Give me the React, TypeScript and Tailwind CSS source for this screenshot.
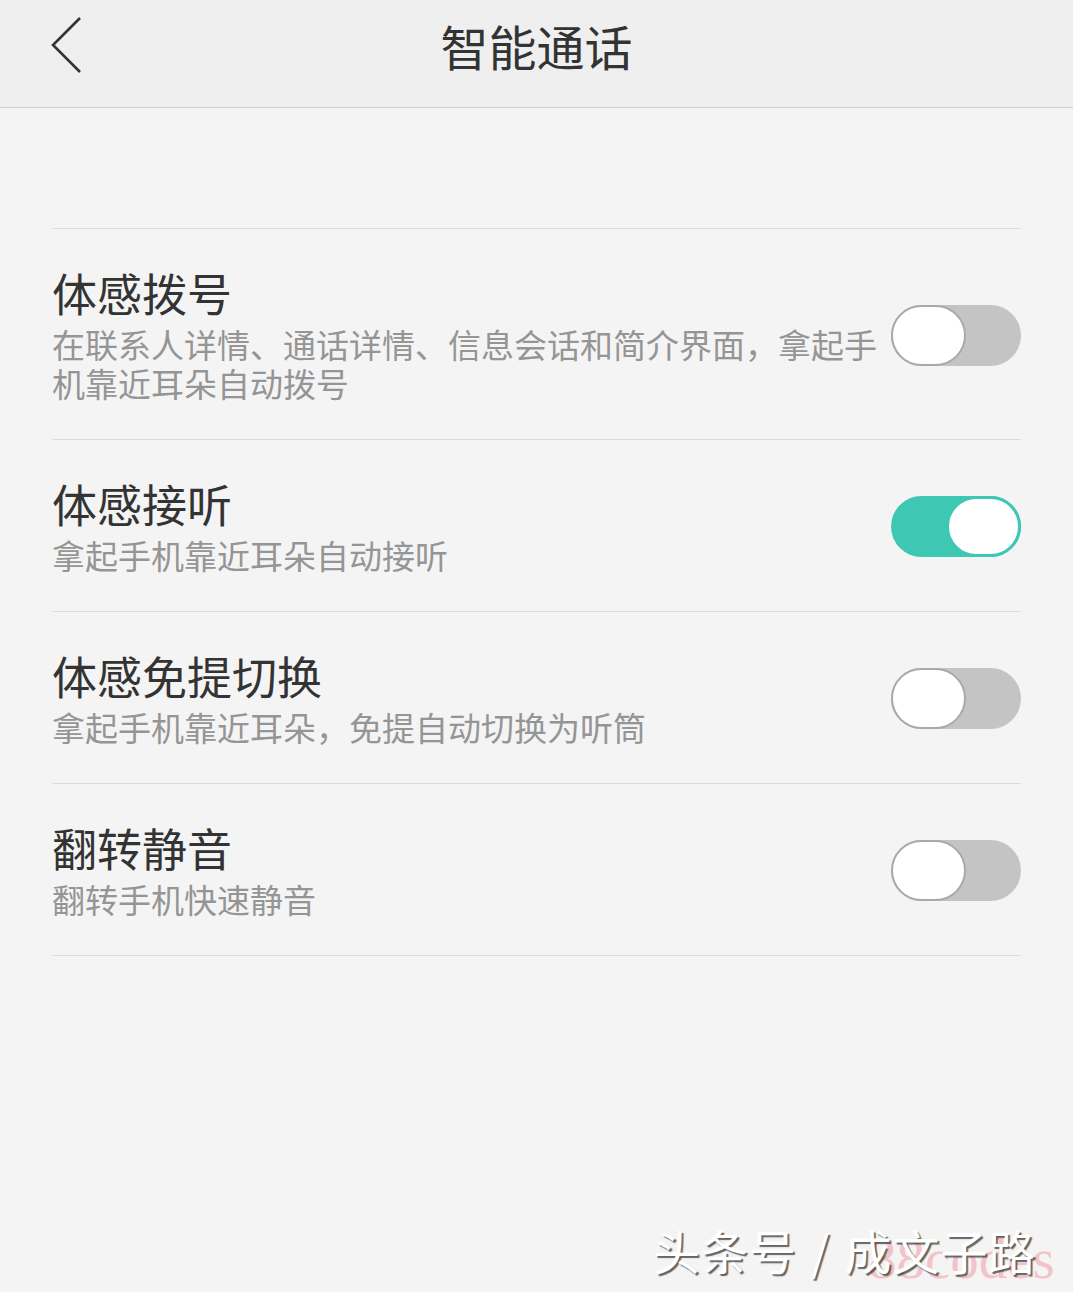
import React from "react";

type Setting = {
  title: string;
  desc: string;
  on: boolean;
};

const settings: Setting[] = [
  {
    title: "体感拨号",
    desc: "在联系人详情、通话详情、信息会话和简介界面，拿起手机靠近耳朵自动拨号",
    on: false,
  },
  { title: "体感接听", desc: "拿起手机靠近耳朵自动接听", on: true },
  { title: "体感免提切换", desc: "拿起手机靠近耳朵，免提自动切换为听筒", on: false },
  { title: "翻转静音", desc: "翻转手机快速静音", on: false },
];

function Toggle({ on }: { on: boolean }) {
  if (on) {
    return (
      <div className="flex h-[61px] w-[130px] shrink-0 justify-end rounded-full bg-[#3ec8b4]">
        <div className="h-[61px] w-[75px] rounded-full border-[3px] border-[#3ec8b4] bg-white" />
      </div>
    );
  }
  return (
    <div className="flex h-[61px] w-[130px] shrink-0 justify-start rounded-full bg-[#c4c4c4]">
      <div className="h-[61px] w-[75px] rounded-full border-[2.5px] border-[#a9a9a9] bg-white" />
    </div>
  );
}

function SettingRow({ item }: { item: Setting }) {
  return (
    <div className="flex items-center gap-[12px] border-t border-[#dcdcdc] pt-[38px] pb-[36px]">
      <div className="flex-1">
        <div className="text-[45px] leading-[52px] text-[#333333]">{item.title}</div>
        <div className="mt-[6px] text-[33px] leading-[39px] text-[#959595]">{item.desc}</div>
      </div>
      <Toggle on={item.on} />
    </div>
  );
}

export default function App() {
  return (
    <div className="relative h-[1292px] w-[1073px] overflow-hidden bg-[#f4f4f4] font-['Noto_Sans_CJK_SC','Noto_Sans',sans-serif]">
      <div className="grid h-[108px] grid-cols-[1fr_auto_1fr] items-center border-b border-[#d0d0d0] bg-[#efefef] pb-[18px]">
        <div className="pl-[50px]">
          <svg width="34" height="58" viewBox="0 0 34 58" fill="none">
            <path d="M30 2 L3 29 L30 56" stroke="#333333" strokeWidth="2.6" />
          </svg>
        </div>
        <div className="text-[48px] leading-[60px] text-[#333333]">智能通话</div>
        <div />
      </div>

      <div className="mx-[52px] mt-[120px] border-b border-[#dcdcdc]">
        {settings.map((item) => (
          <SettingRow key={item.title} item={item} />
        ))}
      </div>

      {/* watermark */}
      <div className="absolute left-[868px] top-[1224px] font-['Liberation_Serif',serif] text-[57px] leading-[70px] text-[#f3c3ca]">
        88codes
      </div>
      <div className="absolute left-[653px] top-[1220px] flex items-center text-[47px] leading-[60px] tracking-[1px] text-white [text-shadow:2px_2px_1px_rgba(40,40,40,0.7)]">
        <span>头条号</span>
        <span className="mx-[14px]">/</span>
        <span>成文子路</span>
      </div>
    </div>
  );
}
